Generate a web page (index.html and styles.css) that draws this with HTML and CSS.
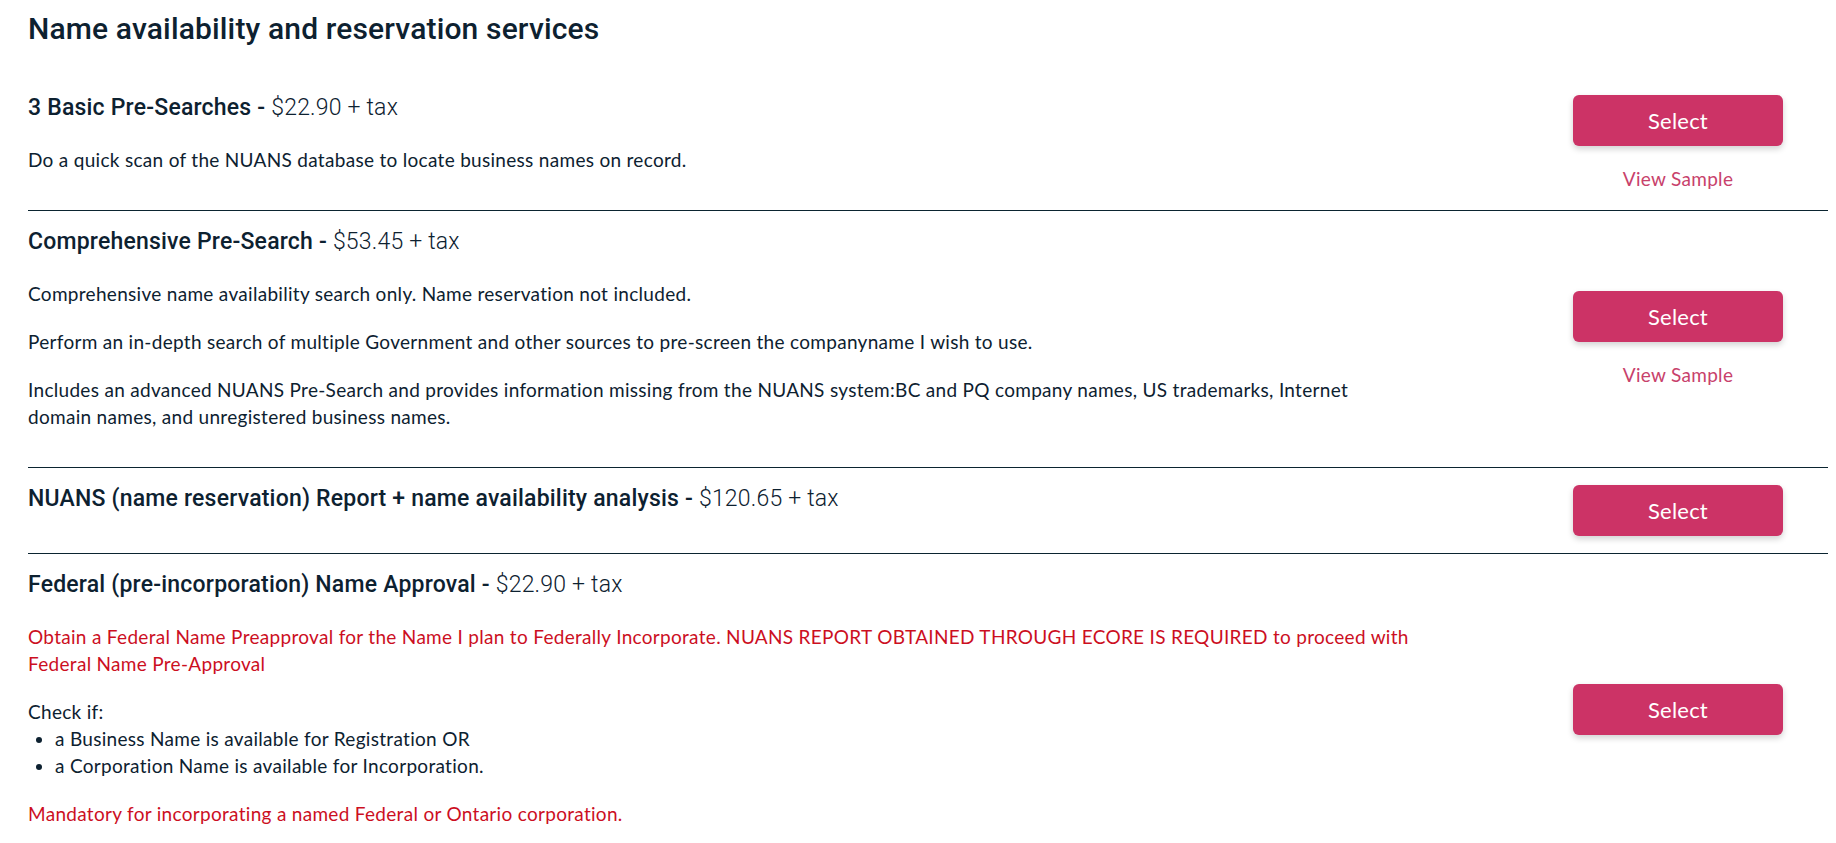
FILE: index.html
```html
<!DOCTYPE html>
<html lang="en">
<head>
<meta charset="utf-8">
<title>Name availability and reservation services</title>
<link rel="stylesheet" href="styles.css">
</head>
<body>
<main class="page">
  <h1 class="page-title">Name availability and reservation services</h1>

  <section class="service">
    <div class="service-info">
      <h2 class="service-name">3 Basic Pre-Searches - <span class="price">$22.90 + tax</span></h2>
      <p>Do a quick scan of the NUANS database to locate business names on record.</p>
    </div>
    <div class="service-actions">
      <button class="btn-select" type="button">Select</button>
      <a class="sample-link" href="#">View Sample</a>
    </div>
  </section>

  <section class="service">
    <div class="service-info">
      <h2 class="service-name">Comprehensive Pre-Search - <span class="price">$53.45 + tax</span></h2>
      <p>Comprehensive name availability search only. Name reservation not included.</p>
      <p>Perform an in-depth search of multiple Government and other sources to pre-screen the companyname I wish to use.</p>
      <p>Includes an advanced NUANS Pre-Search and provides information missing from the NUANS system:BC and PQ company names, US trademarks, Internet domain names, and unregistered business names.</p>
    </div>
    <div class="service-actions">
      <button class="btn-select" type="button">Select</button>
      <a class="sample-link" href="#">View Sample</a>
    </div>
  </section>

  <section class="service">
    <div class="service-info">
      <h2 class="service-name">NUANS (name reservation) Report + name availability analysis - <span class="price">$120.65 + tax</span></h2>
    </div>
    <div class="service-actions">
      <button class="btn-select" type="button">Select</button>
    </div>
  </section>

  <section class="service">
    <div class="service-info">
      <h2 class="service-name">Federal (pre-incorporation) Name Approval - <span class="price">$22.90 + tax</span></h2>
      <p class="alert">Obtain a Federal Name Preapproval for the Name I plan to Federally Incorporate. NUANS REPORT OBTAINED THROUGH ECORE IS REQUIRED to proceed with Federal Name Pre-Approval</p>
      <p class="lead-in">Check if:</p>
      <ul class="checks">
        <li>a Business Name is available for Registration OR</li>
        <li>a Corporation Name is available for Incorporation.</li>
      </ul>
      <p class="alert">Mandatory for incorporating a named Federal or Ontario corporation.</p>
    </div>
    <div class="service-actions">
      <button class="btn-select" type="button">Select</button>
    </div>
  </section>
</main>
</body>
</html>
```
FILE: styles.css
```css
* { box-sizing: border-box; }

html, body {
  margin: 0;
  padding: 0;
  background: #ffffff;
}

body {
  font-family: Lato, "Open Sans", sans-serif;
  color: #0d2130;
  font-size: 19px;
  line-height: 27px;
  letter-spacing: 0.3px;
}

.page {
  padding: 11px 8px 0 28px;
}

.page-title {
  font-family: Roboto, "Liberation Sans", sans-serif;
  font-weight: 500;
  font-size: 30px;
  line-height: 36px;
  letter-spacing: 0.15px;
  margin: 0 0 30px;
  color: #0d2130;
}

.service {
  display: grid;
  grid-template-columns: 1fr 300px;
  align-items: center;
  padding: 16px 0;
  border-bottom: 1px solid #0b2430;
}

.service:last-child { border-bottom: none; }

.service-info {
  max-width: 1385px;
}

.service-name {
  font-family: Roboto, "Liberation Sans", sans-serif;
  font-weight: 500;
  font-size: 23px;
  line-height: 30px;
  letter-spacing: 0.2px;
  margin: 0 0 23px;
  color: #0d2130;
}

.price {
  font-weight: 300;
}

.service-info p {
  margin: 0 0 21px;
}

.service-info p.lead-in {
  margin: 0;
}

.checks {
  margin: 0 0 21px;
  padding: 0 0 0 27px;
}

.alert {
  color: #cc0f1f;
}

.service-actions {
  display: flex;
  flex-direction: column;
  align-items: center;
  gap: 19px;
}

.btn-select {
  width: 210px;
  height: 51px;
  border: none;
  border-radius: 6px;
  background: #cc3366;
  color: #ffffff;
  font-family: Lato, "Open Sans", sans-serif;
  font-size: 22px;
  letter-spacing: 0.2px;
  box-shadow: 0 3px 6px rgba(0, 0, 0, 0.18);
  cursor: pointer;
}

.sample-link {
  color: #c8416b;
  text-decoration: none;
  font-size: 19px;
  line-height: 27px;
}
```
